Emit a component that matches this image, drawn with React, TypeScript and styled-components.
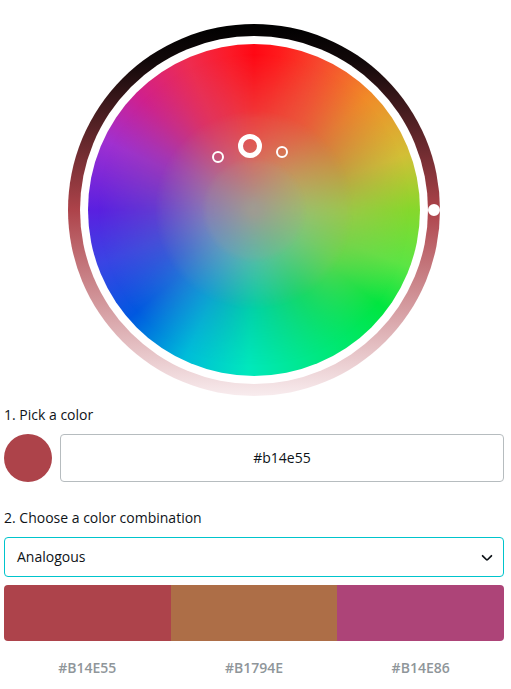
import React from 'react';
import styled, { createGlobalStyle } from 'styled-components';

const GlobalStyle = createGlobalStyle`
  * { box-sizing: border-box; }
  body {
    margin: 0;
    background: #fff;
    color: #0e1318;
    font: 400 14px/24px "Open Sans", "Noto Sans", sans-serif;
  }
`;

const Page = styled.main`
  display: flex;
  flex-direction: column;
  width: 508px;
  padding: 24px 4px 0;
`;

const BrightnessRing = styled.div`
  position: relative;
  align-self: center;
  width: 372px;
  height: 372px;
  padding: 12px;
  border-radius: 50%;
  background: linear-gradient(#000 0%, #110809 10%, #ad434a 50%, #f8ecee 100%);
`;

const WheelFrame = styled.div`
  height: 100%;
  padding: 8px;
  border-radius: 50%;
  background: #fff;
`;

/* Outermost hues; the inner bands are blended over it. */
const Wheel = styled.div`
  position: relative;
  height: 100%;
  border-radius: 50%;
  background: conic-gradient(
    #ff0814 0deg, #ff1a1c 9deg, #f6482e 24deg, #f08a28 45deg, #d2bf36 70deg,
    #86d82c 90deg, #5ce544 110deg, #00e640 127deg, #00e87a 153deg,
    #00e8bc 182deg, #00bcd9 205deg, #0058e0 229deg, #3a44e4 251deg,
    #5a20e0 270deg, #a030d0 295deg, #d0208c 315deg, #ee2c50 336deg,
    #fc1a28 351deg, #ff0814 360deg
  );
`;

/* The blur turns the angular creases between neighbouring hues into soft blends. */
const HueBand = styled.div<{ $colors: string[]; $solid: number; $fade: number }>`
  position: absolute;
  inset: 0;
  border-radius: 50%;
  background: conic-gradient(${p => [...p.$colors, p.$colors[0]].join(', ')});
  mask-image: radial-gradient(circle closest-side, #000 ${p => p.$solid}%, transparent ${p => p.$fade}%);
  filter: blur(7px);
`;

const Handle = styled.span<{ $x: number; $y: number; $size: number; $stroke: number }>`
  position: absolute;
  left: ${p => p.$x}px;
  top: ${p => p.$y}px;
  width: ${p => p.$size}px;
  height: ${p => p.$size}px;
  border: ${p => p.$stroke}px solid #fff;
  border-radius: 50%;
`;

const Label = styled.div<{ $top: number; $bottom: number }>`
  margin: ${p => p.$top}px 0 ${p => p.$bottom}px;
`;

const PickRow = styled.div`
  display: flex;
  gap: 8px;
`;

const Dot = styled.div`
  width: 48px;
  height: 48px;
  border-radius: 50%;
  background: #ad434a;
`;

const HexInput = styled.input`
  flex: 1;
  min-width: 0;
  height: 48px;
  padding: 0 2px 2px;
  border: 1px solid #b6bcbf;
  border-radius: 4px;
  outline: none;
  background: #fff;
  color: inherit;
  font: inherit;
  text-align: center;
`;

const Select = styled.button`
  display: flex;
  align-items: center;
  justify-content: space-between;
  height: 40px;
  padding: 0 10px 0 12px;
  border: 1px solid #00c4cc;
  border-radius: 4px;
  background: #fff;
  color: inherit;
  font: inherit;
`;

const Chevron = styled.svg`
  width: 12px;
  height: 8px;
  margin-top: 2px;
  fill: none;
  stroke: #0e1318;
  stroke-width: 1.75;
  stroke-linecap: round;
  stroke-linejoin: round;
`;

const Palette = styled.div`
  display: grid;
  grid-template-columns: repeat(3, 1fr);
  margin-top: 8px;
  height: 56px;
  border-radius: 4px;
  overflow: hidden;
`;

const Swatch = styled.div<{ $color: string }>`
  background: ${p => p.$color};
`;

const Codes = styled.div`
  display: grid;
  grid-template-columns: repeat(3, 1fr);
  margin-top: 15px;
  color: #8f969a;
  font-weight: 600;
  text-align: center;
`;

/* One colour every 30 degrees, clockwise from the top. */
const middleHues = [
  '#f03838', '#e8583c', '#cb9040', '#9cc848', '#68d64c', '#18d664',
  '#00d0a4', '#109cd4', '#345ed8', '#643cd0', '#a038b4', '#dc3464',
];
const innerHues = [
  '#d86c60', '#cc8860', '#b8a662', '#9cbe6e', '#7cc47c', '#60c48c',
  '#54bca8', '#5ca4bc', '#6c8cc0', '#8878b8', '#a4709c', '#c4647c',
];
const centerHues = ['#9f9b92', '#9f9b92'];

const palette = [
  { code: '#B14E55', fill: '#ad434b' },
  { code: '#B1794E', fill: '#ad6e47' },
  { code: '#B14E86', fill: '#ad4478' },
];

export default function App() {
  return (
    <>
      <GlobalStyle />
      <Page>
        <BrightnessRing>
          <WheelFrame>
            <Wheel>
              <HueBand $colors={middleHues} $solid={55} $fade={94} />
              <HueBand $colors={innerHues} $solid={28} $fade={60} />
              <HueBand $colors={centerHues} $solid={0} $fade={32} />
              <Handle $x={124} $y={107} $size={12} $stroke={2} />
              <Handle $x={150} $y={90} $size={24} $stroke={5} />
              <Handle $x={188} $y={102} $size={12} $stroke={2} />
            </Wheel>
          </WheelFrame>
          <Handle $x={360} $y={180} $size={12} $stroke={6} />
        </BrightnessRing>
        <Label $top={7} $bottom={7}>1. Pick a color</Label>
        <PickRow>
          <Dot />
          <HexInput aria-label="Color" defaultValue="#b14e55" />
        </PickRow>
        <Label $top={24} $bottom={7}>2. Choose a color combination</Label>
        <Select>
          Analogous
          <Chevron viewBox="0 0 12 8">
            <path d="M1.6 1.8 5.3 5.5Q6 6.2 6.7 5.5L10.4 1.8" />
          </Chevron>
        </Select>
        <Palette>
          {palette.map(c => <Swatch key={c.code} $color={c.fill} />)}
        </Palette>
        <Codes>
          {palette.map(c => <span key={c.code}>{c.code}</span>)}
        </Codes>
      </Page>
    </>
  );
}
